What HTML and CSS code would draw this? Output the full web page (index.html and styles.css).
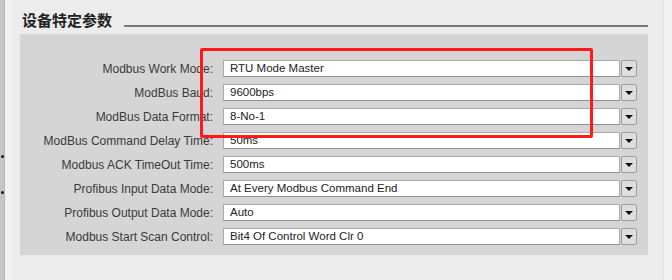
FILE: index.html
```html
<!DOCTYPE html>
<html>
  <head>
    <title>设备特定参数</title>
    <link rel="stylesheet" href="styles.css">
  </head>
  <body>
    <div class="page">
      <div class="splitter">
        <span class="grip"></span>
        <span class="grip"></span>
      </div>
      <div class="splitter-edge"></div>
      <div class="main">
        <div class="section-title">
          <h2>设备特定参数</h2>
          <div class="title-line"></div>
        </div>
        <div class="panel">
          <div class="row">
            <label>Modbus Work Mode:</label>
            <div class="field">RTU Mode Master</div>
            <div class="drop"><span class="arrow"></span></div>
          </div>
          <div class="row">
            <label>ModBus Baud:</label>
            <div class="field">9600bps</div>
            <div class="drop"><span class="arrow"></span></div>
          </div>
          <div class="row">
            <label>ModBus Data Format:</label>
            <div class="field">8-No-1</div>
            <div class="drop"><span class="arrow"></span></div>
          </div>
          <div class="row">
            <label>ModBus Command Delay Time:</label>
            <div class="field">50ms</div>
            <div class="drop"><span class="arrow"></span></div>
          </div>
          <div class="row">
            <label>Modbus ACK TimeOut Time:</label>
            <div class="field">500ms</div>
            <div class="drop"><span class="arrow"></span></div>
          </div>
          <div class="row">
            <label>Profibus Input Data Mode:</label>
            <div class="field">At Every Modbus Command End</div>
            <div class="drop"><span class="arrow"></span></div>
          </div>
          <div class="row">
            <label>Profibus Output Data Mode:</label>
            <div class="field">Auto</div>
            <div class="drop"><span class="arrow"></span></div>
          </div>
          <div class="row">
            <label>Modbus Start Scan Control:</label>
            <div class="field">Bit4 Of Control Word Clr 0</div>
            <div class="drop"><span class="arrow"></span></div>
          </div>
          <div class="highlight"></div>
        </div>
      </div>
      <div class="side-edge"></div>
    </div>
  </body>
</html>
```

FILE: styles.css
```css
body {
  margin: 0;
  background-color: #ececec;
  font-family: "Liberation Sans", Arial, sans-serif;
}

.page {
  display: flex;
  height: 280px;
}

.splitter {
  width: 4px;
  background-color: #c6c6c6;
  border-right: 1px solid #b8b8b8;
  display: flex;
  flex-direction: column;
  align-items: center;
  padding-top: 155px;
  gap: 33px;
}

.grip {
  width: 3px;
  height: 3px;
  border-radius: 50%;
  background-color: #111;
}

.splitter-edge {
  width: 7px;
  background-color: #f1f1f1;
}

.main {
  width: 628px;
  padding-left: 8px;
  padding-top: 11px;
}

.section-title {
  display: flex;
  align-items: flex-end;
  height: 18px;
  margin-bottom: 5px;
}

.section-title h2 {
  margin: 0 0 0 2px;
  font-family: "Noto Sans CJK SC", sans-serif;
  font-size: 15px;
  line-height: 18px;
  font-weight: bold;
  color: #222;
}

.title-line {
  flex: 1;
  height: 2px;
  background-color: #7a7a7a;
  margin-left: 12px;
  margin-bottom: 2px;
}

.panel {
  position: relative;
  background-color: #d5d5d5;
  padding: 26px 12px 10px 0;
  display: flex;
  flex-direction: column;
  gap: 7px;
}

.row {
  display: grid;
  grid-template-columns: 202px 397px 16px;
  column-gap: 1px;
  height: 17px;
  align-items: center;
}

.row label {
  text-align: right;
  font-size: 12px;
  color: #3a3a3a;
  padding-right: 9px;
  white-space: nowrap;
}

.field {
  height: 15px;
  background-color: #fff;
  border: 1px solid #a9a9a9;
  border-bottom-color: #8f8f8f;
  font-size: 11.5px;
  line-height: 15px;
  padding-left: 6px;
  color: #222;
  white-space: nowrap;
  overflow: hidden;
}

.drop {
  height: 15px;
  background-color: #dedede;
  border: 1px solid #9c9c9c;
  border-radius: 2px;
  display: flex;
  align-items: center;
  justify-content: center;
}

.arrow {
  width: 0;
  height: 0;
  border-left: 4px solid transparent;
  border-right: 4px solid transparent;
  border-top: 4px solid #111;
}

.highlight {
  position: absolute;
  left: 180px;
  top: 14px;
  width: 387px;
  height: 84px;
  border: 3px solid #ff1a1a;
  border-radius: 2px;
}

.side-edge {
  flex: 1;
  margin-left: 15px;
  background-color: #f3f3f3;
  border-left: 1px solid #e2e2e2;
}
```
